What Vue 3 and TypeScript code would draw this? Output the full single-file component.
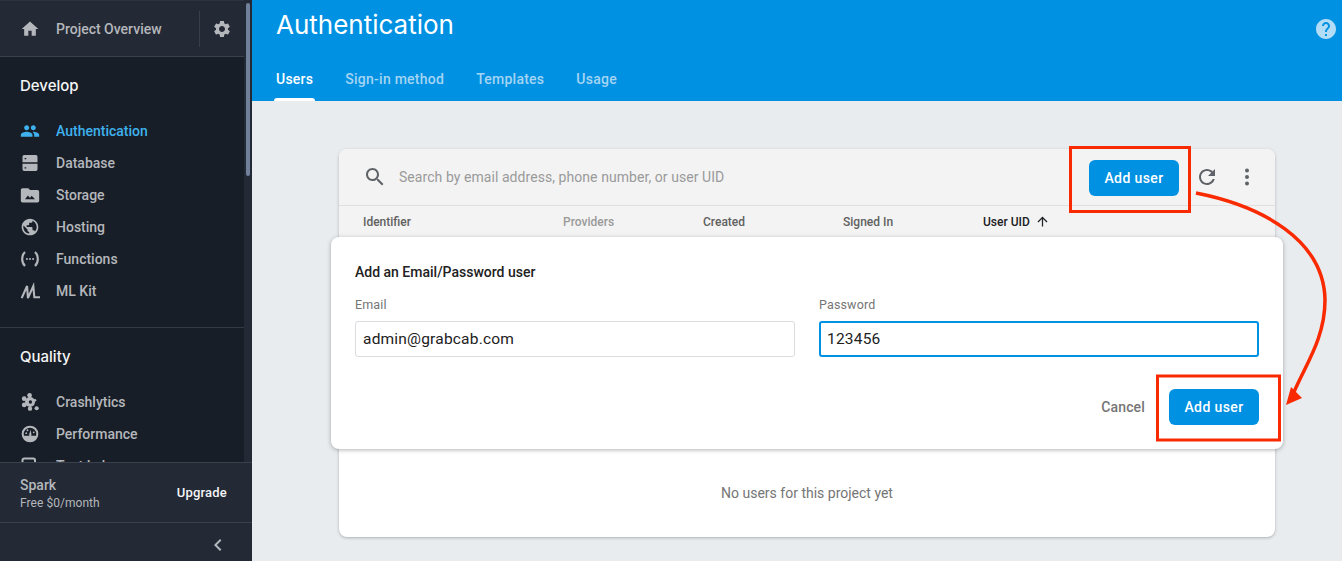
<script setup lang="ts">
interface NavItem {
  label: string;
  icon: string;
  active?: boolean;
}

const developItems: NavItem[] = [
  { label: 'Authentication', icon: 'people', active: true },
  { label: 'Database', icon: 'database' },
  { label: 'Storage', icon: 'storage' },
  { label: 'Hosting', icon: 'hosting' },
  { label: 'Functions', icon: 'functions' },
  { label: 'ML Kit', icon: 'ml' },
];

const qualityItems: NavItem[] = [
  { label: 'Crashlytics', icon: 'crash' },
  { label: 'Performance', icon: 'perf' },
  { label: 'Test Lab', icon: 'testlab' },
];

const tabs = ['Users', 'Sign-in method', 'Templates', 'Usage'];

const columns = [
  { label: 'Identifier', cls: 'col-id' },
  { label: 'Providers', cls: 'col-providers' },
  { label: 'Created', cls: 'col-created' },
  { label: 'Signed In', cls: 'col-signed' },
  { label: 'User UID', cls: 'col-uid' },
];
</script>

<template>
  <div class="page">
    <aside class="sidebar">
      <div class="side-scroll">
        <div class="side-column">
          <div class="overview">
            <svg class="nav-icon" viewBox="0 0 24 24"><path d="M10 20v-6h4v6h5v-8h3L12 3 2 12h3v8z" /></svg>
            <span class="overview-label">Project Overview</span>
            <span class="overview-gear">
              <svg viewBox="0 0 24 24"><path d="M19.14 12.94c.04-.3.06-.61.06-.94 0-.32-.02-.64-.07-.94l2.03-1.58c.18-.14.23-.41.12-.61l-1.92-3.32c-.12-.22-.37-.29-.59-.22l-2.39.96c-.5-.38-1.03-.7-1.62-.94l-.36-2.54c-.04-.24-.24-.41-.48-.41h-3.84c-.24 0-.43.17-.47.41l-.36 2.54c-.59.24-1.13.57-1.62.94l-2.39-.96c-.22-.08-.47 0-.59.22L2.74 8.87c-.12.21-.08.47.12.61l2.03 1.58c-.05.3-.09.63-.09.94s.02.64.07.94l-2.03 1.58c-.18.14-.23.41-.12.61l1.92 3.32c.12.22.37.29.59.22l2.39-.96c.5.38 1.03.7 1.62.94l.36 2.54c.05.24.24.41.48.41h3.84c.24 0 .44-.17.47-.41l.36-2.54c.59-.24 1.13-.56 1.62-.94l2.39.96c.22.08.47 0 .59-.22l1.92-3.32c.12-.22.07-.47-.12-.61l-2.01-1.58zM12 15.6c-1.98 0-3.6-1.62-3.6-3.6s1.62-3.6 3.6-3.6 3.6 1.62 3.6 3.6-1.62 3.6-3.6 3.6z" /></svg>
            </span>
          </div>

          <section class="nav-group develop">
            <h3>Develop</h3>
            <a v-for="item in developItems" :key="item.label" class="nav-item" :class="{ active: item.active }">
              <svg class="nav-icon" viewBox="0 0 24 24">
                <path v-if="item.icon === 'people'" d="M16 11c1.66 0 2.99-1.34 2.99-3S17.66 5 16 5c-1.66 0-3 1.34-3 3s1.34 3 3 3zm-8 0c1.66 0 2.99-1.34 2.99-3S9.66 5 8 5C6.34 5 5 6.34 5 8s1.34 3 3 3zm0 2c-2.33 0-7 1.17-7 3.5V19h14v-2.5c0-2.33-4.67-3.5-7-3.5zm8 0c-.29 0-.62.02-.97.05 1.16.84 1.97 1.97 1.97 3.45V19h6v-2.5c0-2.33-4.67-3.5-7-3.5z" />
                <path v-else-if="item.icon === 'database'" fill-rule="evenodd" d="M5 2.5h14a2 2 0 0 1 2 2V11H3V4.500a2 2 0 0 1 2-2zM5.500 6v1.500h2V6h-2zM3 13h18v6.500a2 2 0 0 1-2 2H5a2 2 0 0 1-2-2V13zm2.500 4v1.500h2V17h-2z" />
                <path v-else-if="item.icon === 'storage'" fill-rule="evenodd" d="M20 6h-8l-2-2H3c-1.100 0-2 .9-2 2v13c0 1.100.9 2 2 2h18c1.100 0 2-.9 2-2V8c0-1.100-.9-2-2-2zM6 17l3.500-4.500 2.500 3 2-2.500 4 4H6z" />
                <path v-else-if="item.icon === 'hosting'" d="M12 2C6.48 2 2 6.48 2 12s4.48 10 10 10 10-4.48 10-10S17.52 2 12 2zm-1 17.93c-3.95-.49-7-3.85-7-7.930 0-.62.08-1.21.21-1.79L9 15v1c0 1.100.9 2 2 2v1.93zm6.900-2.540c-.26-.81-1-1.390-1.900-1.390h-1v-3c0-.55-.45-1-1-1H8v-2h2c.55 0 1-.45 1-1V7h2c1.100 0 2-.9 2-2v-.41c2.930 1.190 5 4.060 5 7.410 0 2.080-.8 3.970-2.100 5.390z" />
                <g v-else-if="item.icon === 'functions'">
                  <path d="M6 3.500C3.500 6 2.600 9 2.600 12s.9 6 3.400 8.500" fill="none" stroke="currentColor" stroke-width="2.600" />
                  <path d="M18 3.500c2.500 2.500 3.400 5.500 3.400 8.500s-.9 6-3.400 8.500" fill="none" stroke="currentColor" stroke-width="2.600" />
                  <circle cx="8.300" cy="12" r="1.200" /><circle cx="12" cy="12" r="1.200" /><circle cx="15.700" cy="12" r="1.200" />
                </g>
                <path v-else-if="item.icon === 'ml'" d="M2 20.500 8.500 6l1 14.500L16 6l1.200 13.500H24" fill="none" stroke="currentColor" stroke-width="2.500" />
              </svg>
              <span>{{ item.label }}</span>
            </a>
          </section>

          <section class="nav-group quality">
            <h3>Quality</h3>
            <a v-for="item in qualityItems" :key="item.label" class="nav-item">
              <svg class="nav-icon" viewBox="0 0 24 24">
                <g v-if="item.icon === 'crash'">
                  <circle cx="12" cy="12" r="6" />
                  <circle cx="12.500" cy="12" r="2" fill="#181e27" />
                  <circle cx="11.500" cy="4" r="2.800" /><circle cx="5" cy="8" r="2.800" /><circle cx="5" cy="15.500" r="2.800" />
                  <circle cx="12" cy="20" r="2.600" /><circle cx="20" cy="19.500" r="2.500" /><circle cx="18" cy="10" r="1.500" />
                </g>
                <g v-else-if="item.icon === 'perf'">
                  <path fill-rule="evenodd" d="M12 2a10 10 0 1 0 0 20 10 10 0 0 0 0-20zm0 2.500a7.500 7.500 0 0 0-7.500 7.500c0 .7.100 1.300.3 2h14.400c.2-.7.300-1.300.3-2A7.500 7.500 0 0 0 12 4.500z" />
                  <path d="M10.800 13l2-6 1 6a1.500 1.500 0 0 1-3 0z" /><circle cx="7.500" cy="11" r="1.100" /><circle cx="9" cy="7.500" r="1.100" /><circle cx="16.500" cy="10" r="1.100" />
                </g>
                <path v-else d="M3 22V5a2 2 0 0 1 2-2h11a2 2 0 0 1 2 2v17" fill="none" stroke="currentColor" stroke-width="2.400" />
              </svg>
              <span>{{ item.label }}</span>
            </a>
          </section>
        </div>
        <div class="scroll-track"><div class="scroll-thumb"></div></div>
      </div>

      <div class="plan">
        <div class="plan-text">
          <div class="plan-name">Spark</div>
          <div class="plan-price">Free $0/month</div>
        </div>
        <span class="upgrade">Upgrade</span>
      </div>
      <div class="collapse">
        <svg viewBox="0 0 24 24"><path d="M15.410 7.410L14 6l-6 6 6 6 1.410-1.410L10.830 12z" /></svg>
      </div>
    </aside>

    <main class="main">
      <header class="banner">
        <div class="banner-top">
          <h1>Authentication</h1>
          <svg class="help" viewBox="0 0 24 24"><path d="M12 2C6.480 2 2 6.480 2 12s4.480 10 10 10 10-4.480 10-10S17.520 2 12 2zm1 17h-2v-2h2v2zm2.070-7.750l-.9.920C13.450 12.900 13 13.500 13 15h-2v-.5c0-1.100.45-2.100 1.170-2.830l1.240-1.260c.37-.36.59-.86.59-1.410 0-1.100-.9-2-2-2s-2 .9-2 2H8c0-2.210 1.790-4 4-4s4 1.790 4 4c0 .88-.36 1.680-.93 2.250z" /></svg>
        </div>
        <nav class="tabs">
          <a v-for="(tab, i) in tabs" :key="tab" class="tab" :class="{ current: i === 0 }">{{ tab }}</a>
        </nav>
      </header>

      <div class="content">
        <div class="card">
          <div class="toolbar">
            <svg class="search-icon" viewBox="0 0 24 24"><path d="M15.500 14h-.79l-.28-.27C15.410 12.590 16 11.110 16 9.500 16 5.910 13.090 3 9.500 3S3 5.910 3 9.500 5.910 16 9.500 16c1.610 0 3.090-.59 4.230-1.570l.27.28v.79l5 4.990L20.490 19l-4.990-5zm-6 0C7.010 14 5 11.990 5 9.500S7.010 5 9.500 5 14 7.010 14 9.500 11.990 14 9.500 14z" /></svg>
            <span class="search-text">Search by email address, phone number, or user UID</span>
            <button class="primary toolbar-add" type="button">Add user</button>
            <svg class="tool-icon refresh" viewBox="0 0 24 24"><path d="M17.650 6.350C16.200 4.900 14.210 4 12 4c-4.420 0-7.990 3.580-7.990 8s3.570 8 7.990 8c3.730 0 6.840-2.550 7.730-6h-2.080c-.82 2.330-3.040 4-5.650 4-3.310 0-6-2.690-6-6s2.690-6 6-6c1.660 0 3.140.69 4.220 1.780L13 11h7V4l-2.350 2.350z" /></svg>
            <svg class="tool-icon more" viewBox="0 0 24 24"><circle cx="12" cy="5.500" r="2" /><circle cx="12" cy="12" r="2" /><circle cx="12" cy="18.500" r="2" /></svg>
          </div>

          <div class="table-head">
            <span v-for="col in columns" :key="col.label" :class="col.cls">
              {{ col.label }}
              <svg v-if="col.cls === 'col-uid'" class="sort" viewBox="0 0 24 24"><path d="M4 12l1.410 1.410L11 7.830V20h2V7.830l5.580 5.590L20 12l-8-8-8 8z" /></svg>
            </span>
          </div>

          <div class="dialog">
            <h2>Add an Email/Password user</h2>
            <div class="fields">
              <label class="field">
                <span>Email</span>
                <div class="input">admin@grabcab.com</div>
              </label>
              <label class="field">
                <span>Password</span>
                <div class="input focused">123456</div>
              </label>
            </div>
            <div class="actions">
              <span class="cancel">Cancel</span>
              <button class="primary" type="button">Add user</button>
            </div>
          </div>

          <div class="empty">No users for this project yet</div>
        </div>
      </div>
    </main>

    <!-- 手書きの赤い注釈 -->
    <svg class="annotation" viewBox="0 0 1342 561" width="1342" height="561">
      <rect x="1070.500" y="147.500" width="119" height="64" />
      <rect x="1157.500" y="376" width="122" height="64" />
      <path class="arrow" d="M1196 193C1262 206 1324 240 1325 300C1325 338 1306 364 1294 392" />
      <polygon points="1291,387 1302,398 1286,405" />
    </svg>
  </div>
</template>

<style>
html, body {
  margin: 0;
  background: #e9ecef;
}
</style>

<style scoped>
.page {
  position: relative;
  display: flex;
  width: 1342px;
  height: 561px;
  overflow: hidden;
  background: #e9ecef;
  font-family: Roboto, "Liberation Sans", sans-serif;
}

/* サイドバー */
.sidebar {
  flex: 0 0 252px;
  display: flex;
  flex-direction: column;
  background: #232935;
  color: #b4b7bb;
}
.side-scroll {
  flex: 1;
  min-height: 0;
  display: flex;
  overflow: hidden;
}
.side-column {
  width: 244px;
  background: #181e27;
}
.scroll-track {
  flex: 0 0 8px;
  padding-top: 3px;
}
.scroll-thumb {
  width: 4px;
  height: 173px;
  margin-left: 2px;
  border-radius: 2px;
  background: #71819b;
}
.overview {
  display: flex;
  align-items: center;
  height: 57px;
  box-sizing: border-box;
  padding-left: 20px;
  background: #232935;
  border-top: 1px solid #2d3340;
  border-bottom: 1px solid #3a404c;
  font-size: 14px;
  font-weight: 500;
}
.overview-label {
  margin-left: 16px;
  flex: 1;
}
.overview-gear {
  display: flex;
  align-items: center;
  justify-content: center;
  width: 44px;
  height: 36px;
  border-left: 1px solid #383e4b;
}
.overview-gear svg {
  width: 20px;
  height: 20px;
  fill: currentColor;
}
.nav-icon {
  flex: 0 0 20px;
  width: 20px;
  height: 20px;
  fill: currentColor;
}
.nav-group h3 {
  margin: 0 0 19px;
  color: #f4f5f6;
  font-family: Inter, Roboto, sans-serif;
  font-size: 15px;
  font-weight: 500;
  line-height: 20px;
}
.nav-group {
  padding-left: 20px;
}
.develop {
  height: 271px;
  padding-top: 19px;
  box-sizing: border-box;
  border-bottom: 1px solid #343a45;
}
.quality {
  padding-top: 19px;
}
.nav-item {
  display: flex;
  align-items: center;
  height: 32px;
  font-size: 14px;
  font-weight: 500;
}
.nav-item span {
  margin-left: 16px;
}
.nav-item.active {
  color: #3eb2ee;
}
.plan {
  flex: 0 0 61px;
  display: flex;
  align-items: center;
  justify-content: space-between;
  box-sizing: border-box;
  padding: 0 25px 0 20px;
  border-top: 1px solid #3a404c;
  border-bottom: 1px solid #3a404c;
}
.plan-text {
  padding-top: 3px;
}
.plan-name {
  font-size: 14px;
  font-weight: 500;
  line-height: 18px;
}
.plan-price {
  font-size: 12px;
  line-height: 18px;
  letter-spacing: .05px;
}
.upgrade {
  color: #f4f5f6;
  font-size: 13px;
  font-weight: 500;
  letter-spacing: .2px;
}
.collapse {
  flex: 0 0 38px;
  display: flex;
  align-items: center;
  justify-content: flex-end;
  box-sizing: border-box;
  padding: 6px 22px 0 0;
}
.collapse svg {
  width: 24px;
  height: 24px;
  fill: #b4b7bb;
}

/* メイン */
.main {
  flex: 1;
  min-width: 0;
}
.banner {
  height: 101px;
  box-sizing: border-box;
  padding-left: 24px;
  background: #0091e2;
  color: #fff;
}
.banner-top {
  display: flex;
  justify-content: space-between;
  height: 63px;
}
h1 {
  margin: 8px 0 0;
  font-family: Inter, Roboto, sans-serif;
  font-size: 26px;
  font-weight: 400;
  line-height: 34px;
}
.help {
  width: 24px;
  height: 24px;
  margin: 17px 4px 0 0;
  fill: #b3dcf6;
}
.tabs {
  display: flex;
  gap: 32px;
  height: 38px;
}
.tab {
  position: relative;
  padding-top: 6px;
  color: #a5d5f3;
  font-size: 14px;
  font-weight: 500;
  line-height: 20px;
  letter-spacing: .25px;
}
.tab.current {
  color: #fff;
}
.tab.current::after {
  content: "";
  position: absolute;
  left: -2px;
  right: -2px;
  bottom: 0;
  height: 3px;
  border-radius: 3px 3px 0 0;
  background: #fff;
}
.content {
  padding: 48px 67px 0 87px;
}
.card {
  height: 388px;
  display: flex;
  flex-direction: column;
  border-radius: 8px;
  background: #fff;
  box-shadow: 0 1px 3px rgba(60, 64, 67, .35);
}
.toolbar {
  display: flex;
  align-items: center;
  flex: 0 0 57px;
  box-sizing: border-box;
  padding: 0 16px 0 24px;
  border-radius: 8px 8px 0 0;
  background: #f3f3f3;
  border-bottom: 1px solid #e0e0e0;
}
.toolbar-add {
  margin-top: 2px;
}
.search-icon {
  width: 24px;
  height: 24px;
  fill: #5f6368;
}
.search-text {
  flex: 1;
  margin-left: 12px;
  color: #9a9a9a;
  font-size: 14px;
  letter-spacing: .06px;
}
.primary {
  width: 90px;
  height: 36px;
  border: 0;
  border-radius: 6px;
  padding: 0;
  background: #0091e2;
  color: #fff;
  font-family: inherit;
  font-size: 14px;
  font-weight: 500;
  letter-spacing: .4px;
}
.tool-icon {
  width: 24px;
  height: 24px;
  fill: #5f6368;
}
.refresh,
.more {
  margin-left: 16px;
}
.table-head {
  display: flex;
  align-items: center;
  flex: 0 0 31px;
  padding-left: 24px;
  background: #f3f3f3;
  color: #616161;
  font-size: 12px;
  font-weight: 500;
}
.table-head span {
  display: flex;
  align-items: center;
}
.col-id { width: 200px; }
.col-providers { width: 140px; color: #9a9a9a; }
.col-created { width: 140px; }
.col-signed { width: 140px; }
.col-uid { color: #202124; }
.sort {
  width: 15px;
  height: 15px;
  margin-left: 5px;
  fill: #202124;
}
.dialog {
  flex: 0 0 212px;
  box-sizing: border-box;
  margin: 0 -8px;
  padding: 26px 24px 0;
  border-radius: 8px;
  background: #fff;
  box-shadow: 0 1px 4px rgba(60, 64, 67, .4);
  position: relative;
}
.dialog h2 {
  margin: 0;
  color: #212121;
  font-size: 14px;
  font-weight: 500;
  line-height: 18px;
}
.fields {
  display: grid;
  grid-template-columns: 1fr 1fr;
  gap: 24px;
  margin-top: 16px;
}
.field span {
  display: block;
  color: #757575;
  font-size: 12.500px;
  line-height: 16px;
  letter-spacing: .15px;
}
.input {
  display: flex;
  align-items: center;
  box-sizing: border-box;
  height: 36px;
  margin-top: 8px;
  padding: 0 7px;
  border: 1px solid #dadce0;
  border-radius: 3px;
  color: #212121;
  font-size: 15.500px;
  letter-spacing: .2px;
}
.input.focused {
  border: 2px solid #0091e2;
  padding: 0 6px;
}
.actions {
  display: flex;
  align-items: center;
  justify-content: flex-end;
  gap: 24px;
  margin-top: 32px;
}
.cancel {
  color: #757575;
  font-size: 14px;
  font-weight: 500;
  letter-spacing: .15px;
}
.empty {
  flex: 1;
  display: flex;
  align-items: center;
  justify-content: center;
  color: #757575;
  font-size: 14px;
}

/* 注釈 */
.annotation {
  position: absolute;
  left: 0;
  top: 0;
  pointer-events: none;
}
.annotation rect,
.annotation path {
  fill: none;
  stroke: #fa2a00;
  stroke-width: 3;
}
.annotation .arrow {
  stroke-width: 3.5;
}
.annotation polygon {
  fill: #fa2a00;
}
</style>
